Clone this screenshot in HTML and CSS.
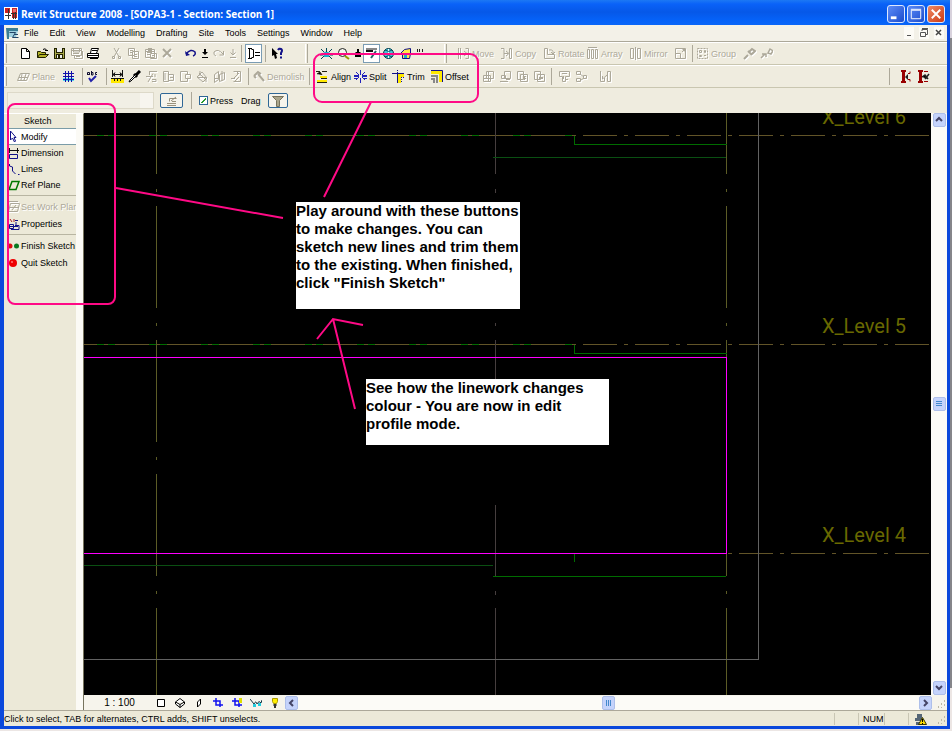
FILE: index.html
```html
<!DOCTYPE html>
<html lang="en">
<head>
<meta charset="utf-8">
<title>Revit Structure 2008</title>
<link rel="stylesheet" href="styles.css">
</head>
<body>
<div class="window">
  <header class="titlebar">
    <svg class="app-icon" viewBox="0 0 14 13"><path fill="#fff" d="M0 0h14v13H0z"/><path fill="#c22" d="M1 1h5v5H1zM8 1h5v10H8z"/><path fill="#e87070" d="M9 2h3v3H9z"/><path stroke="#333" d="M4.500 2v10M1 8.500h6M9.500 6v6M7 6.500h6M11.500 5v7"/></svg>
    <h1>Revit Structure 2008 - [SOPA3-1 - Section: Section 1]</h1>
    <div class="win-buttons">
      <button aria-label="Minimize"><svg viewBox="0 0 17 17"><path fill="#fff" d="M3 11h6v3H3z"/></svg></button>
      <button aria-label="Maximize"><svg viewBox="0 0 17 17"><path fill="none" stroke="#fff" d="M3.500 4.500h10v9h-10zM3 3.500h11"/></svg></button>
      <button class="close" aria-label="Close"><svg viewBox="0 0 17 17"><path stroke="#fff" stroke-width="2" d="M4 4l9 9M13 4l-9 9"/></svg></button>
    </div>
  </header>

  <nav class="menubar">
    <svg class="doc-icon" viewBox="0 0 13 12"><path fill="#3a7c94" d="M0 1h12v3H3v8H1z"/><path fill="#9fd0e0" d="M3 4h9l-2 6H3z"/><path fill="none" stroke="#246" d="M3.500 5.500h6l-3 5h6M8 7.500h4"/></svg>
    <button>File</button><button>Edit</button><button>View</button><button>Modelling</button><button>Drafting</button><button>Site</button><button>Tools</button><button>Settings</button><button>Window</button><button>Help</button>
    <div class="mdi-buttons">
      <button aria-label="Minimize view"><svg viewBox="0 0 10 12"><path stroke="#555" d="M3 8.500h4"/></svg></button>
      <button aria-label="Restore view"><svg viewBox="0 0 10 12"><path fill="none" stroke="#555" d="M1.500 5.500h5v4h-5zM3 4V2.500h5.500v5H7M3 1.500h6"/></svg></button>
      <button aria-label="Close view"><svg viewBox="0 0 10 12"><path stroke="#444" stroke-width="1.500" d="M2 3l5 5M7 3l-5 5"/></svg></button>
    </div>
  </nav>

  <div class="toolbar">
    <i class="grip"></i>
    <div class="group first">
      <button aria-label="New"><svg viewBox="0 0 13 13"><path fill="#fff" stroke="#000" d="M2.500 1.500h5l3 3v7h-8zM7.500 1.500v3h3"/></svg></button>
      <button aria-label="Open"><svg viewBox="0 0 13 13"><path fill="#b5b52a" stroke="#220" d="M1.500 10.500v-6h3l1 1h4v2M1.500 10.500l2-3h9l-3 3z"/><path fill="none" stroke="#000" d="M7 2.500q2-2 4 1M9 3.500h3"/></svg></button>
      <button aria-label="Save"><svg viewBox="0 0 13 13"><path fill="#220" d="M1 1h11v11H1z"/><path fill="#a9a94a" d="M2 2h1v9H2zM10 2h1v9h-1zM3 6h7v1H3z"/><path fill="#eee" d="M4 1h5v4H4zM4 8h5v3H4z"/><path fill="#220" d="M5 8h2v3H5z"/></svg></button>
      <button class="off" aria-label="Save to central"><svg viewBox="0 0 13 13"><path d="M1.500 1.500h10v7h-10zM3.500 2v3h6V2M4.500 8v3.500h8V4M6 9.500h4M3 6.500h6M2 3.500h9"/></svg></button>
      <button aria-label="Print"><svg viewBox="0 0 13 13"><path fill="#fff" stroke="#000" d="M.500 6.500h11v4H.500zM3.500 6l1-4.500h7l-2 4.500"/><path stroke="#000" d="M5 3.500h5M1 8.500h11M3 11.500h8"/></svg></button>
    </div>
    <div class="group">
      <button class="off" aria-label="Cut"><svg viewBox="0 0 13 13"><path d="M4 1l4 7M9 1L5 8M2.500 9.500h2v2h-2zM8.500 9.500h2v2h-2zM5 8l-1 1.500M8 8l1 1.500"/></svg></button>
      <button class="off" aria-label="Copy to clipboard"><svg viewBox="0 0 13 13"><path d="M1.500 1.500h6v7h-6zM5.500 4.500h6v7h-6zM3 3.500h3M3 5.500h2M7 7.500h3M7 9.500h3"/></svg></button>
      <button class="off" aria-label="Paste"><svg viewBox="0 0 13 13"><path d="M1.500 2.500h9v8h-9zM4 1.500h4M4 3.500h4M6.500 6.500h6v5h-6zM3 5.500h5M3 7.500h3M8 8.500h3M2 4.500h8"/></svg></button>
      <button class="off" aria-label="Delete"><svg viewBox="0 0 13 13"><path stroke-width="2" d="M2 2l8 8M10 2L2 10"/></svg></button>
    </div>
    <div class="group">
      <button aria-label="Undo"><svg viewBox="0 0 13 13"><path fill="none" stroke="#118" stroke-width="1.500" d="M2 7q5-6 9-2 1 3-2 4"/><path fill="#118" d="M1 4l1 5 4-1z"/></svg></button>
      <button class="slim" aria-label="Undo list"><svg viewBox="0 0 8 13"><path fill="#000" d="M3 2h2v3h2L4 8 1 5h2zM1 10h6v1H1z"/></svg></button>
      <button class="off" aria-label="Redo"><svg viewBox="0 0 13 13"><path d="M11 7q-5-6-9-2-1 3 2 4M11.500 4v4h-4"/></svg></button>
      <button class="off slim" aria-label="Redo list"><svg viewBox="0 0 8 13"><path d="M4 2v6M1.500 5.500L4 8l2.500-2.500M1 10.500h6"/></svg></button>
    </div>
    <i class="sep"></i>
    <button class="pressed" aria-label="Type selector"><svg viewBox="0 0 13 13"><path fill="none" stroke="#000" d="M1 1.500h4M1 11.500h4M2.500 1v10M4.500 2.500h2v8h-2M8 5.500h5M8 8.500h5"/></svg></button>
    <i class="sep"></i>
    <button aria-label="Help"><svg viewBox="0 0 13 13"><path fill="#000" d="M1 1l6 6H5l1 4-2 1-1-4-2 1z"/><path fill="none" stroke="#118" stroke-width="2" d="M7 3q1-2 3-1t0 4v2M10 9.500v2"/></svg></button>
    <i class="grip gap-wide"></i>
    <div class="group first">
      <button aria-label="Orbit"><svg viewBox="0 0 13 13"><path fill="#2ac" d="M3 6q3-3 7 0l-1 4H4z"/><path stroke="#045" d="M1 2l3 3M6.500 1v4M12 2L9 5M0 8h3M10 8h3M1 12l3-3M12 12L9 9M4 6.500h5"/></svg></button>
      <button aria-label="Zoom"><svg viewBox="0 0 13 13"><circle cx="5.500" cy="5.500" r="4" fill="#f4f8f0" stroke="#222"/><path stroke="#990" stroke-width="2" d="M8 9l4 3"/></svg></button>
      <button class="slim" aria-label="Zoom list"><svg viewBox="0 0 8 13"><path fill="#000" d="M3 2h2v3h2L4 8 1 5h2zM1 8h6v2H1z"/></svg></button>
      <button class="pressed" aria-label="Thin lines"><svg viewBox="0 0 13 13"><path stroke="#111" d="M1 2h11"/><path stroke="#111" stroke-width="2" d="M1 4h7"/><path stroke="#266" stroke-width="2" d="M11 4L6 11M3 7h5"/></svg></button>
      <button aria-label="3D view"><svg viewBox="0 0 13 13"><circle cx="6.500" cy="6.500" r="5" fill="#4dc5d8" stroke="#034"/><path fill="none" stroke="#fff" d="M2 6.500h9M6.500 2v9"/><path fill="none" stroke="#056" d="M3 3q4 3 7 0M3 10q4-3 7 0"/></svg></button>
      <button aria-label="Home view"><svg viewBox="0 0 13 13"><path fill="#ffe84a" stroke="#118" d="M1.500 6.500l4-4 6-1v5l-1 5h-7v-5z"/><path fill="#2ac" d="M5 7h3v4H5z"/></svg></button>
      <button class="slim" aria-label="More"><svg viewBox="0 0 8 13"><path stroke="#222" d="M1.500 2v3M3.500 2v3M6.500 2v3"/></svg></button>
    </div>
    <i class="grip gap-wide"></i>
    <div class="group edit">
      <button class="off lab"><svg viewBox="0 0 13 13"><path d="M1.500 1v11M3.500 1v11M3.500 6.500h6M7 4l3 2.500L7 9M8.500 1.500h3v10h-3"/></svg>Move</button>
      <button class="off lab"><svg viewBox="0 0 13 13"><path d="M1 1.500h3v10H1M4 6.500h4M6 4l3 2.500L6 9M9.500 1.500h2v10h-2z"/></svg>Copy</button>
      <button class="off lab"><svg viewBox="0 0 13 13"><path d="M1.500 1.500v10h10v-4h-7v-6zM6 3q5-1 4 4M8 5l2 2 2-2"/></svg>Rotate</button>
      <button class="off lab"><svg viewBox="0 0 13 13"><path d="M1.500 2.500h2v9h-2zM5.500 2.500h2v9h-2zM9.500 2.500h2v9h-2zM2 .500h9"/></svg>Array</button>
      <button class="off lab"><svg viewBox="0 0 13 13"><path d="M1.500 1.500h3v10h-3zM8.500 1.500h3v10h-3zM6.500 0v13"/></svg>Mirror</button>
      <button class="off" aria-label="Resize"><svg viewBox="0 0 13 13"><path d="M1.500 1.500h10v10h-10zM1.500 6.500h5v5M8 5l3-3M8.500 2.500h2v2"/></svg></button>
    </div>
    <i class="sep"></i>
    <button class="off lab group-cmd"><svg viewBox="0 0 13 13"><path stroke-dasharray="2 1" d="M1.500 1.500h10v10h-10z"/><path d="M3.500 3.500h2v2h-2zM8.500 3.500h1v2h-1zM3.500 8.500h2v1h-2zM8 8.500h2"/></svg>Group</button>
    <button class="off" aria-label="Pin"><svg viewBox="0 0 13 13"><path stroke-width="2" d="M1 12l4-4M5 4l4 4M6 5l3-3 3 2-3 3"/></svg></button>
    <button class="off" aria-label="Unpin"><svg viewBox="0 0 13 13"><path stroke-width="1.500" d="M1 11l4-4M2 7h4v3M8 6l2-4 3 2-2 3z"/></svg></button>
  </div>

  <div class="toolbar">
    <i class="grip"></i>
    <div class="group first">
      <button class="off lab plane"><svg viewBox="0 0 13 13"><path d="M3.500 3.500h9l-3 7h-9zM5 4l-1 6M9 4l-2 6M2 7.500h9"/></svg>Plane</button>
      <button aria-label="Grid"><svg viewBox="0 0 13 13"><path fill="#5ad8f0" d="M1 8h11v3H1z"/><path stroke="#11a" d="M3.500 1v11M6.500 1v11M9.500 1v11M1 3.500h11M1 6.500h11M1 9.500h11"/></svg></button>
    </div>
    <i class="sep gap"></i>
    <button aria-label="Spelling"><svg viewBox="0 0 13 13"><path fill="none" stroke="#113" d="M1.500 5V2.500h2V5M5.500 1v4h1.500V2.500H5.500M11 2.500H9.500v2H11M1 4.500h2"/><path fill="none" stroke="#22a" stroke-width="2" d="M3 8l2 3 5-5"/></svg></button>
    <i class="sep gap"></i>
    <div class="group">
      <button aria-label="Tape measure"><svg viewBox="0 0 13 13"><path fill="#ffe900" d="M0 8h13v5H0z"/><path stroke="#111" d="M1.500 0v7M11.500 0v7M1 4.500h11M4 2.500L2 4.500l2 2M9 2.500l2 2-2 2M0 8.500h13M3.500 9v2M6.500 9v2M9.500 9v2"/></svg></button>
      <button aria-label="Match type"><svg viewBox="0 0 13 13"><path stroke="#000" stroke-width="3" d="M8 5l4-4M6 4l3 3"/><path fill="#fff" stroke="#000" d="M7 5l-5 5-1 2 2-1 5-5"/></svg></button>
      <button class="off" aria-label="Linework"><svg viewBox="0 0 13 13"><path d="M4 1.500h8M4.500 2v3M1 6.500h7M8 3.500L3 12M7 9.500h4v2H7M10 4v3"/></svg></button>
      <button class="off" aria-label="Show"><svg viewBox="0 0 13 13"><path d="M1.500 1.500h5v10h-5zM6.500 4.500h5v6h-5zM3 3v7M8 7.500h3"/></svg></button>
      <button class="off" aria-label="Hide"><svg viewBox="0 0 13 13"><path d="M1.500 1.500h7v3M1.500 1.500v10h7V9M6.500 4.500h5v4h-5z"/></svg></button>
      <button class="off" aria-label="Paint"><svg viewBox="0 0 13 13"><path d="M1 7l5-5 5 6-4 4zM3 3l7 7M2 7.500h8M4 1v5M10 8v4"/></svg></button>
      <button class="off" aria-label="Split face"><svg viewBox="0 0 13 13"><path d="M1.500 4.500l4-3v8l-4 3zM6.500 4.500l5-2v7l-5 2zM9 1v10M1 8.500h4"/></svg></button>
      <button class="off" aria-label="Work plane"><svg viewBox="0 0 13 13"><path d="M3.500 1.500h7v10h-7M9 3L4 8M9 7l-5 5M1 8.500h4M7.500 1v3"/></svg></button>
    </div>
    <i class="sep"></i>
    <button class="off lab demolish"><svg viewBox="0 0 13 13"><path stroke-width="2" d="M2 6l4-4 3 2M6 4l6 7M2 6l2 2"/></svg>Demolish</button>
    <i class="sep gap"></i>
    <div class="group modify">
      <button class="lab"><svg viewBox="0 0 13 13"><path fill="#ffe900" d="M4 6h7v2H4zM1 10h10v2H1z"/><path stroke="#221" d="M0 1.500h4M6 1.500h5M1 4l3-2 2 3M5 8.500h6M1 12.500h10"/></svg>Align</button>
      <button class="lab"><svg viewBox="0 0 13 13"><path stroke="#22b" stroke-width="2" d="M0 6h5M8 6h5"/><path stroke="#22b" d="M6.500 0v5M6.500 8v5M2 2l3 3M11 2L8 5M2 10l3-3M11 10L8 7M0 8.500h4M9 8.500h4"/></svg>Split</button>
      <button class="lab"><svg viewBox="0 0 13 13"><path fill="#ffe900" d="M6 4h6v3H9v6H6z"/><path fill="none" stroke="#118" d="M0 3.500h12M5.500 3v10"/><path stroke="#118" stroke-dasharray="1 1" d="M5.500 0v3M9.500 7v6M9 7.500h3"/></svg>Trim</button>
      <button class="lab"><svg viewBox="0 0 13 13"><path fill="#ffe900" d="M1 1h11v11H9V4H1z"/><path fill="none" stroke="#118" d="M1 .500h11.500V12"/><path fill="none" stroke="#888" stroke-width="2" d="M1 6h6v7M1 9h3v4"/></svg>Offset</button>
    </div>
    <i class="sep gap-large"></i>
    <div class="group">
      <button class="off" aria-label="Group edit"><svg viewBox="0 0 13 13"><path d="M4.500 1.500h7v7h-7zM1.500 5.500h7v6h-7zM6.500 2v9M2 8.500h9"/></svg></button>
      <button class="off" aria-label="Ungroup"><svg viewBox="0 0 13 13"><path d="M5.500 1.500h6v7h-6zM2.500 5.500h4v3h-4zM1 11.500h8M7 9.500h4"/></svg></button>
      <button class="off" aria-label="Add to group"><svg viewBox="0 0 13 13"><path d="M1.500 1.500h6v8h-6zM4.500 4.500h7v7h-7zM7 6.500h3M7 8.500h3M8.500 6v4"/></svg></button>
      <button class="off" aria-label="Remove from group"><svg viewBox="0 0 13 13"><path d="M1.500 1.500h6v8h-6zM4.500 4.500h7v7h-7zM6 7.500h4M6 8.500h4"/></svg></button>
    </div>
    <i class="sep"></i>
    <div class="group">
      <button class="off" aria-label="Edit cut"><svg viewBox="0 0 13 13"><path d="M1.500 1.500h10v5h-4v5h-3v-5h-3zM4 3.500h5M5.500 6v3M8 9.500h2"/></svg></button>
      <button class="off" aria-label="Join"><svg viewBox="0 0 13 13"><path d="M1.500 1.500h4v3h-4zM5 4l4 3M1.500 8.500h4v3h-4zM8.500 5.500h3v3h-3zM6 10l3-2"/></svg></button>
      <button class="off last" aria-label="Wall joins"><svg viewBox="0 0 13 13"><path d="M1.500 1v10.500h4V8M8.500 1.500h3v10h-3zM3.500 6v3L8 5"/></svg></button>
    </div>
    <div class="group right">
      <i class="sep"></i>
      <button aria-label="Analytical model"><svg viewBox="0 0 13 13"><path fill="#900" d="M1 0h5v2H5v9h1v2H1v-2h1V2H1z"/><path fill="none" stroke="#900" d="M8 3.500h2V1.500M8 9.500h2v2"/><path fill="#222" d="M5 7l3-3v6z"/></svg></button>
      <button aria-label="Analytical check"><svg viewBox="0 0 13 13"><path fill="#900" d="M1 0h5v2H5v9h1v2H1v-2h1V2H1z"/><path fill="none" stroke="#900" d="M7 1.500h4M7 11.500h4"/><path stroke="#222" stroke-width="1.500" d="M5 7l3-2 3 4M8 9l4-5"/></svg></button>
    </div>
  </div>

  <div class="options">
    <select class="type-select" aria-label="Element type" disabled><option></option></select>
    <button class="boxed" aria-label="Properties"><svg viewBox="0 0 14 12"><path fill="none" stroke="#99917c" d="M4.500 6.500v-3h7M2 8.500h9M2 10.500h9M6 6l5-4M7 6.500h4"/></svg></button>
    <i class="sep"></i>
    <input type="checkbox" id="press" checked><label for="press"><span>Press</span><span>Drag</span></label>
    <button class="boxed narrow" aria-label="Filter"><svg viewBox="0 0 14 12"><path fill="#aaa58c" stroke="#77735c" d="M1.500 1.500h11l-4 4v6h-3v-6z"/></svg></button>
  </div>

  <main class="workspace">
    <aside class="design-bar">
      <h2>Sketch</h2>
      <button class="active"><svg viewBox="0 0 12 13"><path fill="#fff" stroke="#118" d="M2.500 1v9l2-2 2 4 1-1-1.500-3.500H8z"/></svg>Modify</button>
      <button><svg viewBox="0 0 12 13"><path fill="none" stroke="#118" d="M1.500 7.500h8v4h-8z"/><path stroke="#111" d="M0 3.500h11M1.500 1v5M9.500 1v5"/></svg>Dimension</button>
      <button><svg viewBox="0 0 12 13"><path fill="none" stroke="#118" d="M1.500 1v2l3 1v4l3 3M10 11.500h1.500"/></svg>Lines</button>
      <button><svg viewBox="0 0 12 13"><path fill="none" stroke="#070" stroke-width="1.500" d="M4 2.500h7L8 10.500H1z"/></svg>Ref Plane</button>
      <hr>
      <button class="off tall"><svg viewBox="0 0 12 13"><path d="M2.500 2.500h9l-2 8h-9zM4 9l4-5M2 6.500h8M1 .500h9"/></svg>Set Work Plan</button>
      <button><svg viewBox="0 0 12 13"><path fill="none" stroke="#118" d="M1.500 6.500h4v4h-4zM3 11.500h8v-4H7M8 4v3"/><path stroke="#a22" d="M2 1l2 3M6 1v3"/><path stroke="#118" d="M7 2.500h3M2 8.500h8"/></svg>Properties</button>
      <hr>
      <button class="tall"><svg viewBox="0 0 12 13"><circle cx="2" cy="6" r="2.500" fill="#d11"/><circle cx="8.500" cy="6" r="2.500" fill="#0a7a20"/></svg>Finish Sketch</button>
      <button><svg viewBox="0 0 12 13"><circle cx="5" cy="6" r="4" fill="#e00"/><circle cx="4" cy="5" r="1" fill="#f77"/></svg>Quit Sketch</button>
    </aside>

    <section class="view">
      <div class="view-main">
        <svg class="drawing" role="img" aria-label="Section view">
          <g transform="translate(-84 -113)" shape-rendering="crispEdges" fill="none">
            <path class="green" d="M84 135.500h491M84 344.500h491"/>
            <path class="level" d="M63 135.500h1500M63 344.500h1500"/>
            <path class="level" d="M739 553.500h900M728 553.500h4"/>
            <path class="grid" d="M156.500 72v1400M726.500 72v1400"/>
            <path class="grid-dim" d="M495.500 113v61M495.500 189v4M495.500 323v3M495.500 340v42M495.500 505v71M495.500 591v4M495.500 608v500"/>
            <path class="crop" d="M758.500 113v546.500H84"/>
            <path class="green" d="M574.500 136v8.500h152M574.500 345v8.500h152M493 576.500h233M574.500 554v8"/>
            <path class="green-dim" d="M493 157.500h233M84 565.500h409"/>
            <path class="magenta" d="M84 357.500h642.500v196H84"/>
          </g>
          <g transform="translate(-84 -113)" class="level-name">
            <text x="822" y="124">X_Level 6</text>
            <text x="822" y="333">X_Level 5</text>
            <text x="822" y="542">X_Level 4</text>
          </g>
        </svg>
        <div class="scroll vertical">
          <button aria-label="Scroll up"><svg viewBox="0 0 12 12"><path fill="none" stroke="#446" stroke-width="2" d="M3 7l3-3 3 3"/></svg></button>
          <i class="track"></i>
          <button aria-label="Vertical scroll thumb"><svg viewBox="0 0 12 12"><path stroke="#48c" d="M3 3.500h6M3 5.500h6M3 7.500h6"/></svg></button>
          <i class="track"></i>
          <button aria-label="Scroll down"><svg viewBox="0 0 12 12"><path fill="none" stroke="#446" stroke-width="2" d="M3 4l3 3 3-3"/></svg></button>
        </div>
      </div>
      <div class="view-bar">
        <button class="scale">1 : 100</button>
        <div class="view-controls">
          <button aria-label="Detail level"><svg viewBox="0 0 12 12"><path fill="#fff" stroke="#000" d="M2.500 2.500h7v7h-7z"/></svg></button>
          <button aria-label="Model graphics"><svg viewBox="0 0 12 12"><path fill="#fff" stroke="#000" d="M1.500 5L6 1.500 10.500 5v2L6 10.500 1.500 7zM1.500 5L6 7.500 10.500 5M6 7.500v3"/></svg></button>
          <button aria-label="Shadows"><svg viewBox="0 0 12 12"><path fill="#fff" stroke="#000" d="M4.500 5l3-3v5l-3 3z"/></svg></button>
          <button aria-label="Crop view"><svg viewBox="0 0 12 12"><path fill="none" stroke="#11e" stroke-width="1.500" d="M4 1v7h7M1 4h7v6"/></svg></button>
          <button aria-label="Crop region"><svg viewBox="0 0 12 12"><path fill="none" stroke="#11e" stroke-width="1.500" d="M4 1v7h7M1 4h7v6"/><path fill="#dd0" d="M8 1h3v5H8z"/></svg></button>
          <button aria-label="Hide or isolate"><svg viewBox="0 0 12 12"><path fill="none" stroke="#134" d="M0 2l4 5q2-4 3 0 2-4 4-1l1-3"/><path fill="#2cd" d="M3 7h3v3H3zM8 6h3v3H8z"/></svg></button>
          <button aria-label="Reveal hidden"><svg viewBox="0 0 12 12"><path fill="#fe0" stroke="#a90" d="M3.500 1.500h5v3l-1 2h-3l-1-2z"/><path stroke="#333" stroke-width="2" d="M4.500 8h3M5 10h2"/></svg></button>
        </div>
        <div class="scroll horizontal">
          <button aria-label="Scroll left"><svg viewBox="0 0 12 12"><path fill="none" stroke="#446" stroke-width="2" d="M7 3L4 6l3 3"/></svg></button>
          <i class="track"></i>
          <button aria-label="Horizontal scroll thumb"><svg viewBox="0 0 12 12"><path stroke="#48c" d="M3.500 3v6M5.500 3v6M7.500 3v6"/></svg></button>
          <i class="track"></i>
          <button aria-label="Scroll right"><svg viewBox="0 0 12 12"><path fill="none" stroke="#446" stroke-width="2" d="M4 3l3 3-3 3"/></svg></button>
        </div>
        <svg class="corner" viewBox="0 0 15 15"><path stroke="#bbb7a5" stroke-dasharray="2 2" d="M12.500 5v8M9.500 8v5M6.500 11v2"/></svg>
      </div>
    </section>
  </main>

  <footer class="status">
    <p>Click to select, TAB for alternates, CTRL adds, SHIFT unselects.</p>
    <span class="pane"></span>
    <span class="pane num">NUM</span>
    <span class="pane"></span>
    <span class="pane worksets"><svg viewBox="0 0 14 13"><path fill="#567" d="M3 1h5v4H3zM1 5h8v3H1zM2 9h5v3H2z"/><path fill="#fd0" stroke="#330" d="M8.500 4.500l4 7h-8z"/><path stroke="#000" d="M8.500 6v3M8.500 10v1"/></svg></span>
    <svg class="corner" viewBox="0 0 15 15"><path stroke="#bbb7a5" stroke-dasharray="2 2" d="M12.500 5v8M9.500 8v5M6.500 11v2"/></svg>
  </footer>
</div>

<svg class="markup" aria-hidden="true">
  <rect x="8" y="104" width="107" height="200" rx="7"/>
  <rect x="314" y="54" width="164" height="48" rx="8"/>
  <path d="M371 102L324 197M116 188l167 30M355 409l-22-90M317 339l16-20 30 6"/>
</svg>
<p class="callout buttons-note">Play around with these buttons<br>to make changes. You can<br>sketch new lines and trim them<br>to the existing. When finished,<br>click "Finish Sketch"</p>
<p class="callout colour-note">See how the linework changes<br>colour - You are now in edit<br>profile mode.</p>
</body>
</html>
```
FILE: styles.css
```css
* { box-sizing: border-box; }

body {
  margin: 0;
  padding: 0 2px 2px 0;
  min-height: 100vh;
  display: flex;
  position: relative;
  overflow: hidden;
  background: linear-gradient(#d8d2dc 38px, #85858a 38px, #85858a 688px, #ece6e4 688px);
  font: 9px/12px "Liberation Sans", sans-serif;
  color: #000;
}

h1, h2, p { margin: 0; font-size: inherit; }

button {
  display: flex;
  align-items: center;
  justify-content: center;
  margin: 0;
  padding: 0;
  border: 0;
  background: none;
  font: inherit;
  color: inherit;
  white-space: nowrap;
}

svg { display: block; flex: none; }

.window {
  flex: 1;
  min-width: 0;
  display: flex;
  flex-direction: column;
  border: solid #0a48dc;
  border-width: 0 3px 3px 4px;
  background: #ece9d8;
}

/* Title bar */
.titlebar {
  display: flex;
  align-items: center;
  height: 25px;
  margin: 0 -3px 0 -4px;
  padding: 2px 5px 0 4px;
  gap: 3px;
  background: linear-gradient(#1c78f4 0, #0a62f8 4px, #0658e8 12px, #0562f8 20px, #0a66f8 25px);
  color: #fff;
}
.titlebar h1 { flex: 1; font: bold 10px/14px "Open Sans", sans-serif; white-space: nowrap; }
.app-icon { width: 14px; height: 13px; }
.win-buttons { display: flex; gap: 2px; }
.win-buttons button {
  width: 18px;
  height: 18px;
  border: 1px solid #dce8ff;
  border-radius: 3px;
  background: linear-gradient(135deg, #5c8cf8, #1c4ccc);
}
.win-buttons .close { background: linear-gradient(135deg, #f08a64, #cc3a14); }
.win-buttons svg { width: 16px; height: 16px; }

/* Menus */
.menubar {
  display: flex;
  align-items: center;
  height: 17px;
  padding: 0 3px 0 2px;
  gap: 11px;
  border-bottom: 1px solid #aca899;
  background: #f3f1e8;
}
.doc-icon { width: 13px; height: 12px; margin-right: -6px; }
.mdi-buttons { display: flex; gap: 5px; margin-left: auto; }
.mdi-buttons button { width: 10px; height: 12px; background: #fcfbf6; }
.mdi-buttons svg { width: 10px; height: 12px; }

/* Toolbars */
.toolbar {
  display: flex;
  align-items: center;
  height: 23px;
  border-bottom: 1px solid #c9c6b0;
  border-top: 1px solid #fff;
  background: #efecdf;
}
.toolbar button { width: 17px; height: 19px; flex: none; }
.toolbar button.slim { width: 11px; }
.toolbar button.pressed { width: 17px; border: 1px solid #7a9cb4; background: #fff; }
.toolbar svg { width: 13px; height: 13px; }
.toolbar .slim svg { width: 8px; }
.toolbar .lab { width: auto; justify-content: flex-start; gap: 2px; }
.group { display: flex; align-items: center; margin-left: 6px; }
.sep + .group { margin-left: 1px; }
.group.first { margin-left: 10px; }
.group.edit { margin-left: 10px; }
.toolbar .edit .lab { width: 43px; }
.sep + .modify { margin-left: 5px; }
.toolbar .modify .lab { width: 38px; }
.group.right { margin-left: auto; margin-right: 15px; }
.group.right .sep { margin-right: 8px; }
.toolbar .plane { width: 43px; }
.toolbar .demolish { width: 52px; }
.toolbar .group-cmd { width: 45px; }
.toolbar .last { margin-left: 7px; }
.off { color: #aca899; text-shadow: 1px 1px #fff; }
.off path { fill: none; stroke: #aca899; }
.off svg { filter: drop-shadow(1px 1px #fff); }
.grip { width: 3px; height: 19px; border-left: 1px solid #fff; border-right: 1px solid #aca899; }
.sep { width: 1px; height: 17px; margin: 0 3px; background: #aca899; }
.sep.gap { margin: 0 1px 0 5px; }
.sep.gap-large { margin: 0 1px 0 9px; }
.gap-wide { margin-left: 19px; }

/* Options bar */
.options {
  display: flex;
  align-items: center;
  height: 25px;
  padding-left: 3px;
  background: #efecdf;
}
.type-select {
  appearance: none;
  width: 147px;
  height: 17px;
  margin-right: 6px;
  border: 1px solid #d6d2c0;
  background: linear-gradient(90deg, #f3f1e8 132px, #fbfaf6 132px);
}
.boxed { width: 23px; height: 15px; border: 1px solid #2f6796; border-radius: 2px; background: #f6f4ec; }
.boxed.narrow { width: 20px; }
.boxed svg { width: 14px; height: 12px; }
.options .sep { margin: 0 7px 0 8px; }
.options input {
  appearance: none;
  width: 9px;
  height: 9px;
  margin: 0;
  border: 1px solid #2f6796;
  background: #fff linear-gradient(135deg, transparent 40%, #2a9a30 40%, #2a9a30 60%, transparent 60%) center / 5px 5px no-repeat;
}
.options label { display: flex; gap: 8px; margin: 0 7px 0 2px; }

/* Workspace */
.workspace { flex: 1; display: flex; min-height: 0; }
.design-bar {
  flex: none;
  width: 80px;
  padding: 1px 7px 0 4px;
  border-top: 1px solid #fff;
  border-right: 1px solid #77745e;
  background: linear-gradient(90deg, transparent 72px, #fbfaf5 72px);
}
.design-bar h2 { height: 13px; padding-left: 16px; font-weight: normal; line-height: 13px; }
.design-bar button { width: 100%; height: 16px; gap: 1px; justify-content: flex-start; overflow: hidden; }
.design-bar button.active { height: 17px; border: solid #7a9ca8; border-width: 1px 0; background: #fff; }
.design-bar button.tall { height: 18px; }
.design-bar svg { width: 12px; height: 13px; }
.design-bar hr { margin: 2px 0; border: 0; border-top: 1px solid #b8b5a2; }

.view { flex: 1; min-width: 0; display: flex; flex-direction: column; }
.view-main { flex: 1; display: flex; min-height: 0; background: #000; }
.drawing { flex: 1; min-width: 0; height: 100%; }
.green { stroke: #006c00; }
.green-dim { stroke: #0a4f12; }
.level { stroke: #625428; stroke-dasharray: 34 7 4 7; }
.grid { stroke: #5c5c26; stroke-dasharray: 102 15 3 14; }
.grid-dim { stroke: #463e3e; }
.crop { stroke: #626262; }
.magenta { stroke: #f0f; }
.level-name { fill: #696900; font: 20px Roboto, sans-serif; }

.scroll { display: flex; background: #fcfbf7; }
.scroll button { flex: none; width: 13px; height: 14px; border: 1px solid #aebfea; border-radius: 2px; background: #c5d3fb; }
.scroll svg { width: 12px; height: 12px; }
.track { flex: 1; }
.vertical { flex-direction: column; align-items: center; width: 16px; }
.horizontal { flex: 1; align-items: center; }

.view-bar { display: flex; align-items: center; height: 15px; background: #f6f4ec; }
.scale { width: 71px; font-size: 10px; }
.view-controls { display: flex; gap: 7px; margin: 0 4px 0 0; }
.view-controls svg { width: 12px; height: 12px; }
.view-controls button { width: 12px; }
.corner { width: 15px; height: 15px; }

/* Status bar */
.status { display: flex; align-items: center; height: 16px; border-top: 1px solid #aca899; }
.status p { flex: 1; white-space: nowrap; }
.pane { width: 24px; height: 12px; border-left: 1px solid #c9c6b4; }
.pane.num { padding-left: 4px; width: 26px; }
.pane.worksets { padding-left: 5px; }
.pane svg { width: 14px; height: 13px; }

/* Markup over the window */
.markup {
  position: absolute;
  top: 0;
  left: 0;
  width: 100%;
  height: 100%;
  pointer-events: none;
  fill: none;
  stroke: #ff0a86;
  stroke-width: 2;
}
.callout {
  position: absolute;
  background: #fff;
  font: bold 15px/18px "Liberation Sans", sans-serif;
  white-space: nowrap;
}
.buttons-note { left: 296px; top: 202px; width: 224px; height: 107px; }
.colour-note { left: 366px; top: 379px; width: 243px; height: 66px; }
```
